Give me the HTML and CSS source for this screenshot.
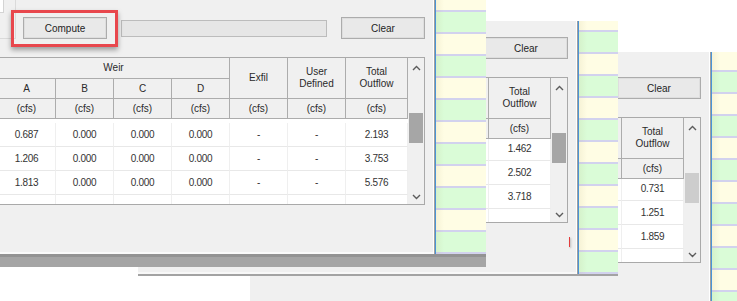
FILE: index.html
```html
<!DOCTYPE html>
<html>
<head>
<meta charset="utf-8">
<title>Outflow</title>
<link rel="stylesheet" href="styles.css">
</head>
<body>
<div class="desk">

  <section class="shot shot3">
    <div class="window w3">
      <div class="toolbar">
        <button class="btn">Compute</button>
        <div class="progress"></div>
        <button class="btn">Clear</button>
      </div>
      <div class="grid">
        <div class="cols">
          <div class="head">
            <div class="h weir">Weir</div>
            <div class="h tall">Exfil</div>
            <div class="h tall">User<br>Defined</div>
            <div class="h tall">Total<br>Outflow</div>
            <div class="h">A</div><div class="h">B</div><div class="h">C</div><div class="h">D</div>
            <div class="h">(cfs)</div><div class="h">(cfs)</div><div class="h">(cfs)</div><div class="h">(cfs)</div><div class="h">(cfs)</div><div class="h">(cfs)</div><div class="h">(cfs)</div>
          </div>
          <div class="body">
            <div class="rows">
              <div class="r"><span>0.000</span><span>0.000</span><span>0.000</span><span>0.000</span><span>-</span><span>-</span><span>0.731</span></div>
              <div class="r"><span>0.000</span><span>0.000</span><span>0.000</span><span>0.000</span><span>-</span><span>-</span><span>1.251</span></div>
              <div class="r"><span>0.000</span><span>0.000</span><span>0.000</span><span>0.000</span><span>-</span><span>-</span><span>1.859</span></div>
              <div class="r"><span></span><span></span><span></span><span></span><span></span><span></span><span></span></div>
            </div>
          </div>
        </div>
        <div class="sbar">
          <div class="arr up"><svg width="9" height="6" viewBox="0 0 9 6"><polyline points="1,5 4.5,1.5 8,5"/></svg></div>
          <div class="track"><div class="thumb"></div></div>
          <div class="arr down"><svg width="9" height="6" viewBox="0 0 9 6"><polyline points="1,1 4.5,4.5 8,1"/></svg></div>
        </div>
      </div>
    </div>
    <div class="stripes"></div>
  </section>

  <section class="shot shot2">
    <div class="window w2">
      <div class="toolbar">
        <button class="btn">Compute</button>
        <div class="progress"></div>
        <button class="btn">Clear</button>
      </div>
      <div class="grid">
        <div class="cols">
          <div class="head">
            <div class="h weir">Weir</div>
            <div class="h tall">Exfil</div>
            <div class="h tall">User<br>Defined</div>
            <div class="h tall">Total<br>Outflow</div>
            <div class="h">A</div><div class="h">B</div><div class="h">C</div><div class="h">D</div>
            <div class="h">(cfs)</div><div class="h">(cfs)</div><div class="h">(cfs)</div><div class="h">(cfs)</div><div class="h">(cfs)</div><div class="h">(cfs)</div><div class="h">(cfs)</div>
          </div>
          <div class="body">
            <div class="rows">
              <div class="r"><span>0.000</span><span>0.000</span><span>0.000</span><span>0.000</span><span>-</span><span>-</span><span>1.462</span></div>
              <div class="r"><span>0.000</span><span>0.000</span><span>0.000</span><span>0.000</span><span>-</span><span>-</span><span>2.502</span></div>
              <div class="r"><span>0.000</span><span>0.000</span><span>0.000</span><span>0.000</span><span>-</span><span>-</span><span>3.718</span></div>
              <div class="r"><span></span><span></span><span></span><span></span><span></span><span></span><span></span></div>
            </div>
          </div>
        </div>
        <div class="sbar">
          <div class="arr up"><svg width="9" height="6" viewBox="0 0 9 6"><polyline points="1,5 4.5,1.5 8,5"/></svg></div>
          <div class="track"><div class="thumb"></div></div>
          <div class="arr down"><svg width="9" height="6" viewBox="0 0 9 6"><polyline points="1,1 4.5,4.5 8,1"/></svg></div>
        </div>
      </div>
      <div class="mark"></div>
    </div>
    <div class="stripes"></div>
  </section>

  <section class="shot shot1">
    <div class="window w1">
      <div class="top">
        <div class="panel"><div class="field"></div></div>
        <div class="toolbar">
          <div class="hl"><button class="btn">Compute</button></div>
          <div class="progress"></div>
          <button class="btn">Clear</button>
        </div>
      </div>
      <div class="grid">
        <div class="cols">
          <div class="head">
            <div class="h weir">Weir</div>
            <div class="h tall">Exfil</div>
            <div class="h tall">User<br>Defined</div>
            <div class="h tall">Total<br>Outflow</div>
            <div class="h">A</div><div class="h">B</div><div class="h">C</div><div class="h">D</div>
            <div class="h">(cfs)</div><div class="h">(cfs)</div><div class="h">(cfs)</div><div class="h">(cfs)</div><div class="h">(cfs)</div><div class="h">(cfs)</div><div class="h">(cfs)</div>
          </div>
          <div class="body">
            <div class="rows">
              <div class="r"><span>0.687</span><span>0.000</span><span>0.000</span><span>0.000</span><span>-</span><span>-</span><span>2.193</span></div>
              <div class="r"><span>1.206</span><span>0.000</span><span>0.000</span><span>0.000</span><span>-</span><span>-</span><span>3.753</span></div>
              <div class="r"><span>1.813</span><span>0.000</span><span>0.000</span><span>0.000</span><span>-</span><span>-</span><span>5.576</span></div>
              <div class="r"><span></span><span></span><span></span><span></span><span></span><span></span><span></span></div>
            </div>
          </div>
        </div>
        <div class="sbar">
          <div class="arr up"><svg width="9" height="6" viewBox="0 0 9 6"><polyline points="1,5 4.5,1.5 8,5"/></svg></div>
          <div class="track"><div class="thumb"></div></div>
          <div class="arr down"><svg width="9" height="6" viewBox="0 0 9 6"><polyline points="1,1 4.5,4.5 8,1"/></svg></div>
        </div>
      </div>
    </div>
    <div class="stripes"></div>
  </section>

</div>
</body>
</html>
```

FILE: styles.css
```css
* { box-sizing: border-box; }
html, body { margin: 0; padding: 0; }
body {
  width: 737px;
  height: 301px;
  overflow: hidden;
  background: #ffffff;
  font-family: "Liberation Sans", Arial, sans-serif;
  font-size: 10px;
  color: #2e2e2e;
}
.desk { position: relative; width: 737px; height: 301px; overflow: hidden; }

/* stacked screenshots (windows on a desktop) */
.shot { position: absolute; display: flex; align-items: stretch; }
.shot1 {
  left: -20px; top: 0; width: 506px; height: 254px; z-index: 3;
  box-shadow: 0 3px 0 #939393, 0 13px 0 #a5a5a5;
}
.shot2 {
  left: 138px; top: 21px; width: 480px; height: 255px; z-index: 2;
  border-bottom: 2px solid #a3a3a3;
}
.shot3 { left: 250px; top: 52px; width: 500px; height: 260px; z-index: 1; }

.window {
  flex: none;
  position: relative;
  display: flex;
  flex-direction: column;
  align-items: flex-end;
  background: #f0f0f0;
  border-right: 1px solid #a0a0a0;
  padding-right: 9px;
  box-shadow: inset -1px 0 0 #ffffff;
}
.w1 { width: 455px; box-shadow: inset -1px 0 0 #ffffff, inset 0 -2px 0 #fafafa; }
.w2 { width: 440px; padding-top: 16px; box-shadow: inset -1px 0 0 #ffffff, inset 0 -2px 0 #f8f8f8; }
.w3 { width: 461px; padding-top: 25px; padding-right: 9px; }

.top { align-self: stretch; display: flex; align-items: flex-start; }
.panel {
  width: 36px; height: 39px;
  border-right: 1px solid #dadada;
  border-bottom: 1px solid #dadada;
}
.field {
  margin-left: 3px; width: 21px; height: 13px;
  background: #ffffff;
  border-right: 1px solid #d4d4d4;
  border-bottom: 1px solid #d4d4d4;
}
.top .toolbar { margin-left: auto; margin-top: 17px; }

.toolbar { display: flex; align-items: center; gap: 14px; height: 22px; }
.btn {
  width: 84px; height: 22px; margin: 0; padding: 0;
  background: #e9e9e9;
  border: 1px solid #acacac;
  box-shadow: inset 0 0 0 1px #dedede;
  font-family: "Liberation Sans", Arial, sans-serif;
  font-size: 10px;
  color: #1e1e1e;
}
.progress { width: 206px; height: 17px; background: #e6e6e6; border: 1px solid #bcbcbc; }

.hl { position: relative; display: flex; }
.hl::after {
  content: "";
  position: absolute;
  left: -12px; top: -7px; right: -11px; bottom: -8px;
  border: 3px solid #e8474d;
  box-shadow: 0 3px 5px rgba(0, 0, 0, 0.35);
}

/* data grid */
.grid {
  margin-top: 18px;
  width: 428px; height: 148px;
  display: flex;
  border: 1px solid #a9a9a9;
  background: #ffffff;
}
.w2 .grid, .w3 .grid { height: 146px; }
.cols { width: 410px; display: flex; flex-direction: column; }
.head {
  display: grid;
  grid-template-columns: repeat(6, 58px) 62px;
  grid-template-rows: 21px 20px 20px;
  background: #f0f0f0;
}
.h {
  display: flex; align-items: center; justify-content: center;
  text-align: center; line-height: 12px;
  border-right: 1px solid #acacac;
  border-bottom: 1px solid #acacac;
  color: #2a2a2a;
}
.weir { grid-column: span 4; }
.tall { grid-row: span 2; }
.body { flex: 1; overflow: hidden; }
.w1 .rows { padding-top: 4px; }
.w2 .rows, .w3 .rows { margin-top: -2px; }
.r { display: grid; grid-template-columns: repeat(6, 58px) 62px; height: 24px; }
.r span {
  display: flex; align-items: center; justify-content: center;
  border-right: 1px solid #efefef;
  border-bottom: 1px solid #e8e8e8;
  color: #333333;
  letter-spacing: -0.3px;
}

.sbar { width: 16px; display: flex; flex-direction: column; background: #f0f0f0; }
.arr { display: flex; align-items: center; justify-content: center; }
.arr.up { height: 20px; }
.arr.down { height: 14px; }
.arr polyline { fill: none; stroke: #5c5c5c; stroke-width: 1.4; }
.track { flex: 1; }
.thumb { margin: 35px auto 0; width: 14px; height: 30px; background: #a6a6a6; }
.w3 .thumb { background: #cdcdcd; }

.mark {
  position: absolute; left: 431px; top: 216px;
  width: 1px; height: 10px; background: #e23c3c;
  box-shadow: 1px 1px 2px rgba(0, 0, 0, 0.3);
}

.stripes {
  flex: 1;
  border-left: 1px solid #4a94d8;
  background-image:
    linear-gradient(to right, rgba(170, 150, 90, 0.10), rgba(170, 150, 90, 0) 8px),
    linear-gradient(to bottom, #d2d2ee 0 2px, #dafcd7 2px 22px, #d2d2ee 22px 24px, #fffde4 24px 44px);
  background-size: 100% 100%, 100% 44px;
  background-repeat: no-repeat, repeat;
}
.shot1 .stripes { background-position: 0 0, 0 10px; }
.shot2 .stripes { background-position: 0 0, 0 9px; }
.shot3 .stripes { background-position: 0 0, 0 18px; }
```
